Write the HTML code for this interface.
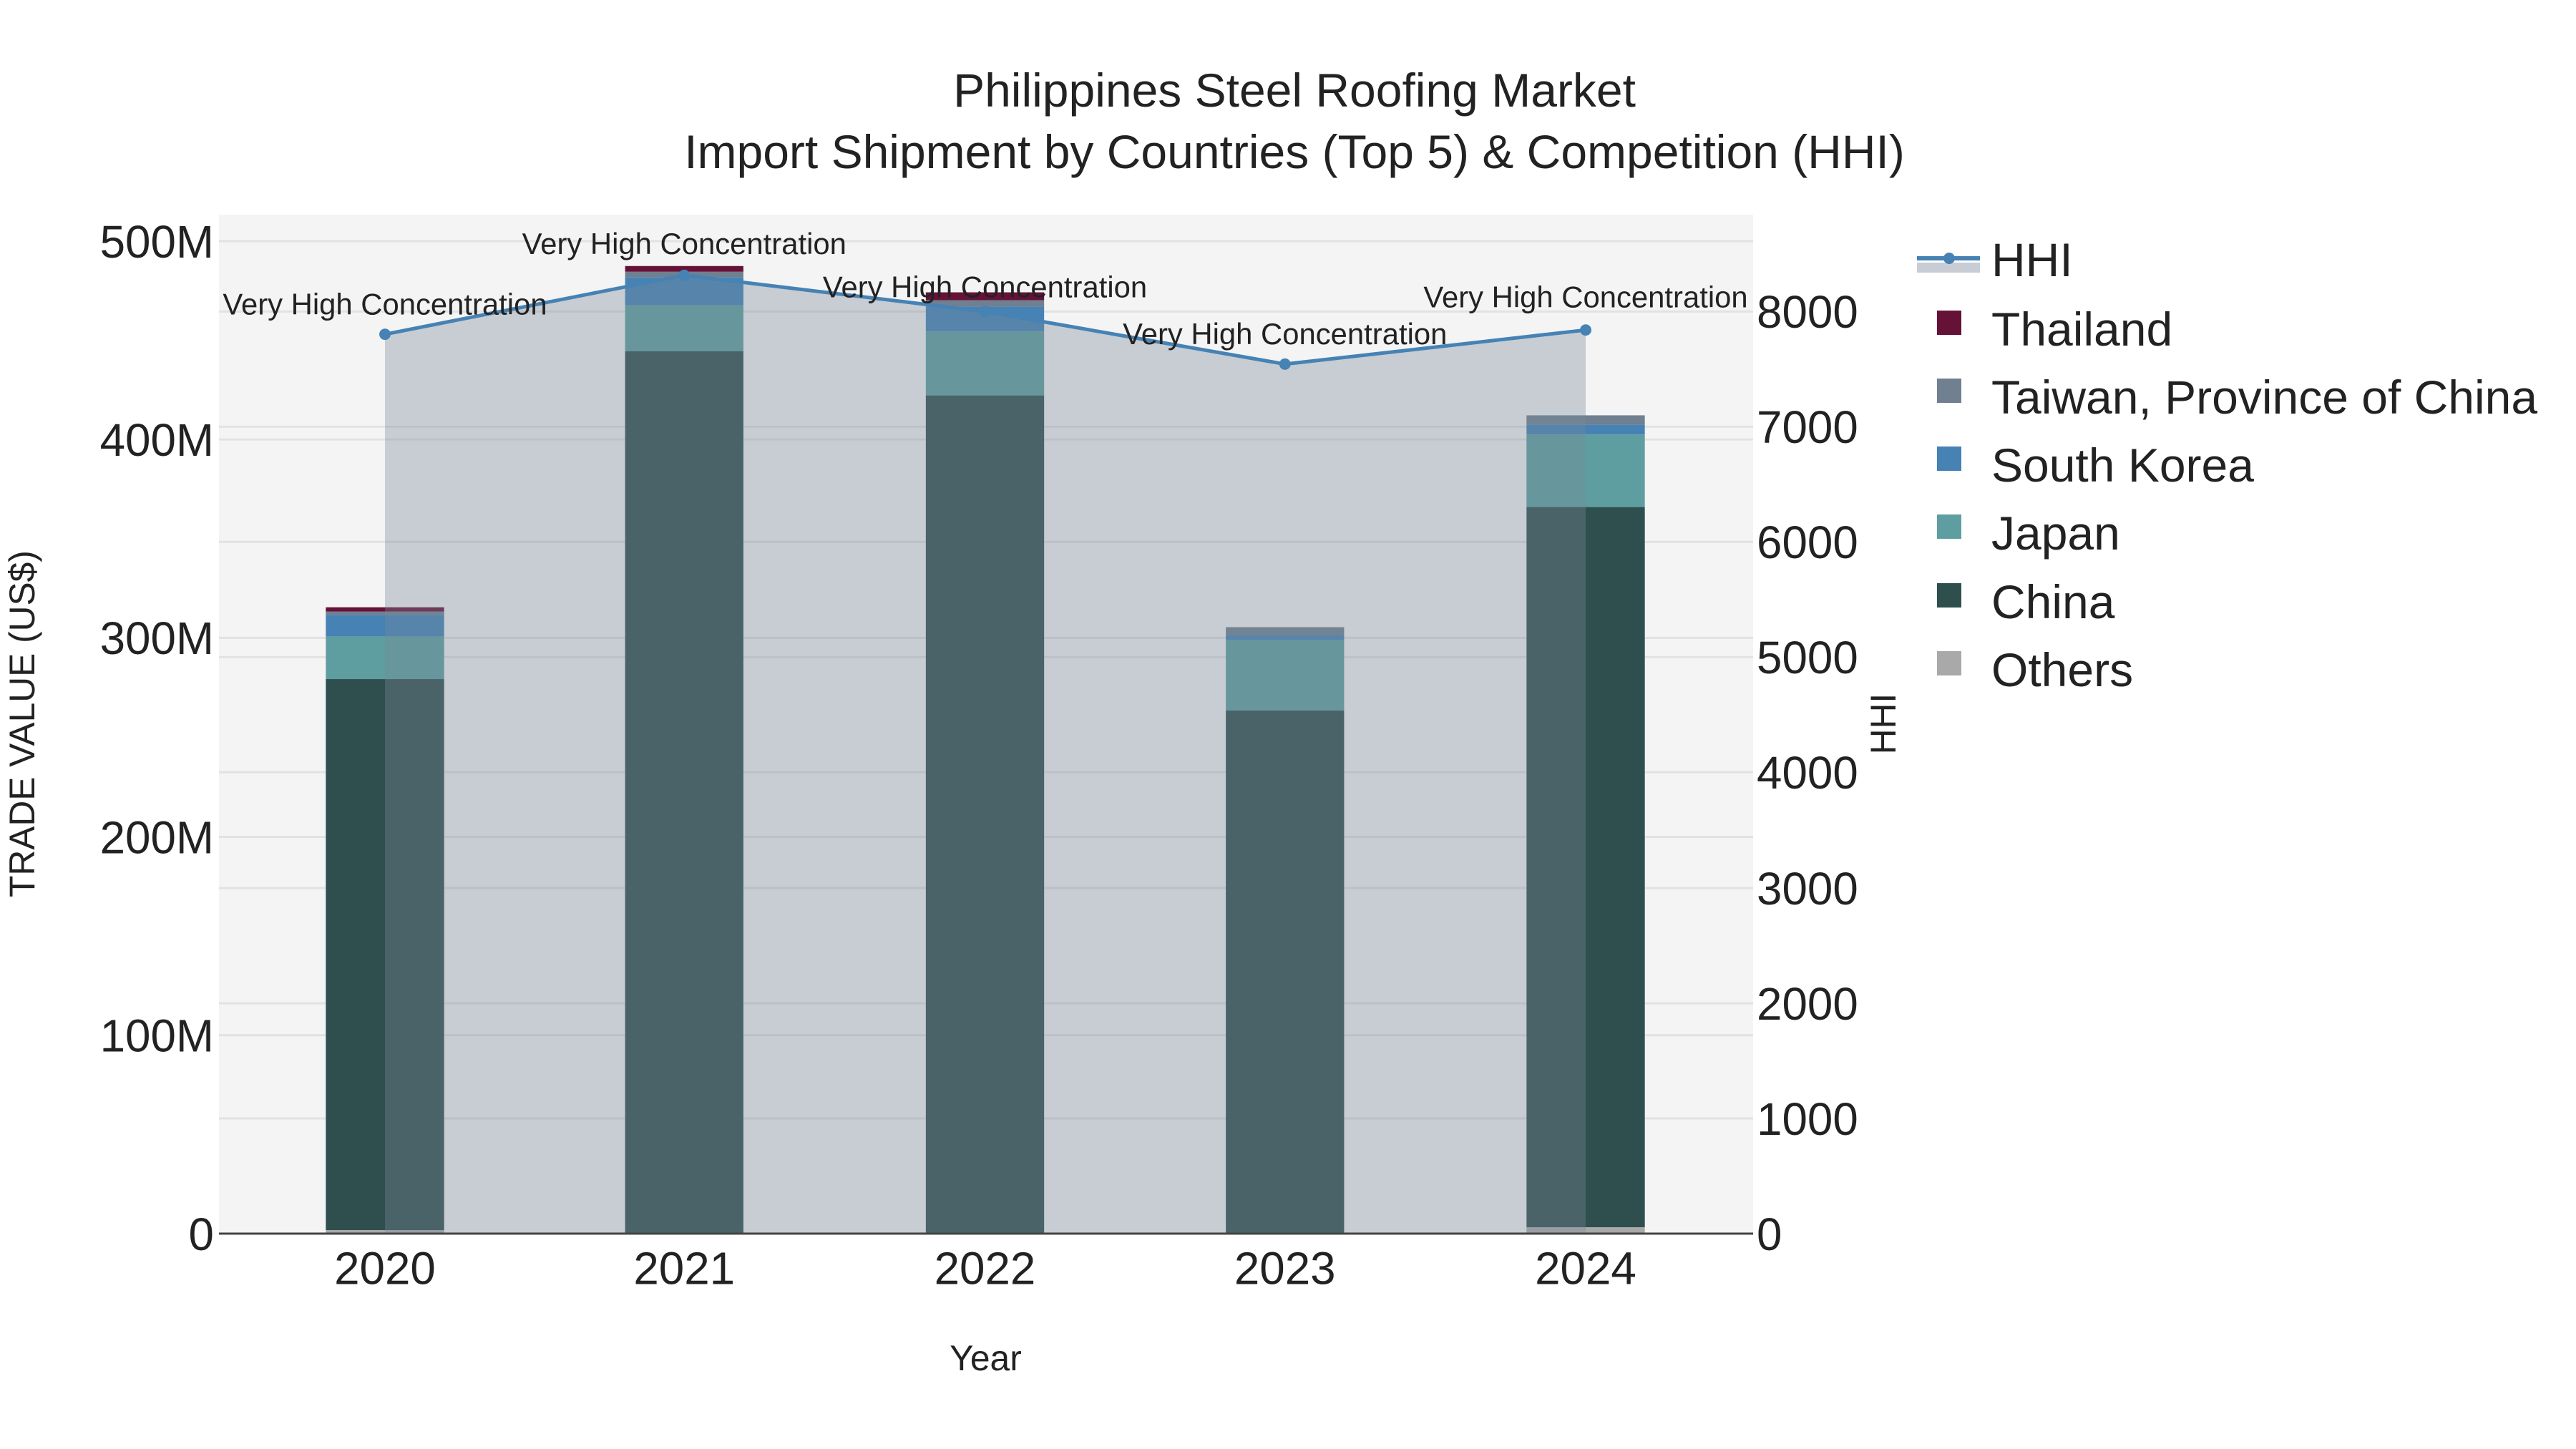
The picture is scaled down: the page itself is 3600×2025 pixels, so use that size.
<!DOCTYPE html>
<html><head><meta charset="utf-8"><style>body{margin:0;background:#fff}svg{display:block}text{font-family:"Liberation Sans",sans-serif;fill:#222}</style></head><body>
<svg width="3600" height="2025" viewBox="0 0 3600 2025">
<rect width="3600" height="2025" fill="#fff"/>
<g transform="matrix(0.99585 0 0 0.99355 0.24 2.17)">
<rect x="307" y="300" width="2153" height="1433" fill="#f4f4f4"/>
<g stroke="#e2e2e2" stroke-width="3">
<line x1="307" x2="2460" y1="337" y2="337"/><line x1="307" x2="2460" y1="616" y2="616"/><line x1="307" x2="2460" y1="895" y2="895"/><line x1="307" x2="2460" y1="1175" y2="1175"/><line x1="307" x2="2460" y1="1454" y2="1454"/>
<line x1="307" x2="2460" y1="436" y2="436"/><line x1="307" x2="2460" y1="598" y2="598"/><line x1="307" x2="2460" y1="760" y2="760"/><line x1="307" x2="2460" y1="922" y2="922"/><line x1="307" x2="2460" y1="1084" y2="1084"/><line x1="307" x2="2460" y1="1247" y2="1247"/><line x1="307" x2="2460" y1="1409" y2="1409"/><line x1="307" x2="2460" y1="1571" y2="1571"/>
</g>
<g>
<rect x="457" y="1728" width="166" height="5" fill="#a9a9a9"/>
<rect x="457" y="953" width="166" height="775" fill="#2f4f4f"/>
<rect x="457" y="893" width="166" height="60" fill="#5f9ea0"/>
<rect x="457" y="863" width="166" height="30" fill="#4682b4"/>
<rect x="457" y="858" width="166" height="5" fill="#708090"/>
<rect x="457" y="852" width="166" height="6" fill="#661237"/>

<rect x="877" y="492" width="166" height="1241" fill="#2f4f4f"/>
<rect x="877" y="427" width="166" height="65" fill="#5f9ea0"/>
<rect x="877" y="388" width="166" height="39" fill="#4682b4"/>
<rect x="877" y="380" width="166" height="8" fill="#708090"/>
<rect x="877" y="372" width="166" height="8" fill="#661237"/>

<rect x="1299" y="554" width="166" height="1179" fill="#2f4f4f"/>
<rect x="1299" y="464" width="166" height="90" fill="#5f9ea0"/>
<rect x="1299" y="429" width="166" height="35" fill="#4682b4"/>
<rect x="1299" y="420" width="166" height="9" fill="#708090"/>
<rect x="1299" y="409" width="166" height="11" fill="#661237"/>

<rect x="1720" y="997" width="166" height="736" fill="#2f4f4f"/>
<rect x="1720" y="898" width="166" height="99" fill="#5f9ea0"/>
<rect x="1720" y="891" width="166" height="7" fill="#4682b4"/>
<rect x="1720" y="880" width="166" height="11" fill="#708090"/>

<rect x="2142" y="1724" width="166" height="9" fill="#a9a9a9"/>
<rect x="2142" y="711" width="166" height="1013" fill="#2f4f4f"/>
<rect x="2142" y="609" width="166" height="102" fill="#5f9ea0"/>
<rect x="2142" y="595" width="166" height="14" fill="#4682b4"/>
<rect x="2142" y="582" width="166" height="13" fill="#708090"/>
</g>
<polygon points="540,468 960,385 1382,436 1803,510 2225,462 2225,1733 540,1733" fill="rgba(119,136,153,0.36)"/>
<polyline points="540,468 960,385 1382,436 1803,510 2225,462" fill="none" stroke="#4682b4" stroke-width="5"/>
<g fill="#4682b4"><circle cx="540" cy="468" r="8"/><circle cx="960" cy="385" r="8"/><circle cx="1382" cy="436" r="8"/><circle cx="1803" cy="510" r="8"/><circle cx="2225" cy="462" r="8"/></g>
<line x1="307" x2="2460" y1="1733" y2="1733" stroke="#444" stroke-width="3"/>
<g font-size="42" text-anchor="middle">
<text x="540" y="440">Very High Concentration</text>
<text x="960" y="355">Very High Concentration</text>
<text x="1382" y="416">Very High Concentration</text>
<text x="1803" y="482">Very High Concentration</text>
<text x="2225" y="430">Very High Concentration</text>
</g>
<g font-size="64" text-anchor="end">
<text x="300" y="360">500M</text><text x="300" y="639">400M</text><text x="300" y="918">300M</text><text x="300" y="1198">200M</text><text x="300" y="1477">100M</text><text x="300" y="1756">0</text>
</g>
<g font-size="64">
<text x="2465" y="459">8000</text><text x="2465" y="621">7000</text><text x="2465" y="783">6000</text><text x="2465" y="945">5000</text><text x="2465" y="1107">4000</text><text x="2465" y="1270">3000</text><text x="2465" y="1432">2000</text><text x="2465" y="1594">1000</text><text x="2465" y="1756">0</text>
</g>
<g font-size="64" text-anchor="middle">
<text x="540" y="1804">2020</text><text x="960" y="1804">2021</text><text x="1382" y="1804">2022</text><text x="1803" y="1804">2023</text><text x="2225" y="1804">2024</text>
</g>
<text x="1383" y="1925" font-size="50" text-anchor="middle">Year</text>
<text transform="translate(48,1016) rotate(-90)" font-size="50" text-anchor="middle">TRADE VALUE (US$)</text>
<text transform="translate(2660,1016) rotate(-90)" font-size="50" text-anchor="middle">HHI</text>
</g>
<g font-size="66" text-anchor="middle">
<text x="1809" y="149">Philippines Steel Roofing Market</text>
<text x="1809" y="235">Import Shipment by Countries (Top 5) &amp; Competition (HHI)</text>
</g>
<g transform="translate(-14,-3)">
<rect x="2693" y="370" width="88" height="14" fill="#c8cdd5"/>
<line x1="2693" x2="2781" y1="364" y2="364" stroke="#4682b4" stroke-width="6"/>
<circle cx="2738" cy="364" r="8" fill="#4682b4"/>
<rect x="2721" y="437" width="34" height="34" fill="#661237"/>
<rect x="2721" y="532" width="34" height="34" fill="#708090"/>
<rect x="2721" y="627" width="34" height="34" fill="#4682b4"/>
<rect x="2721" y="722" width="34" height="34" fill="#5f9ea0"/>
<rect x="2721" y="818" width="34" height="34" fill="#2f4f4f"/>
<rect x="2721" y="913" width="34" height="34" fill="#a9a9a9"/>
<g font-size="66">
<text x="2797" y="389">HHI</text>
<text x="2797" y="486">Thailand</text>
<text x="2797" y="581">Taiwan, Province of China</text>
<text x="2797" y="676">South Korea</text>
<text x="2797" y="771">Japan</text>
<text x="2797" y="867">China</text>
<text x="2797" y="962">Others</text>
</g>
</g>
</svg>
</body></html>
